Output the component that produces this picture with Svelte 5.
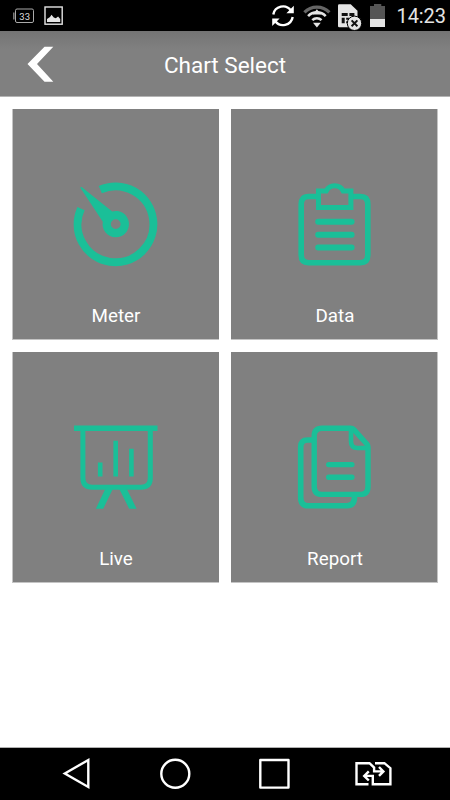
<script>
  // Chart picker: four tiles below the title bar, framed by the phone's own bars.
  const TILES = [
    { id: "meter", name: "Meter" },
    { id: "data", name: "Data" },
    { id: "live", name: "Live" },
    { id: "report", name: "Report" },
  ];
</script>

<div class="screen">
  <div class="status">
    <svg class="left" width="70" height="31" viewBox="0 0 70 31" aria-hidden="true">
      <rect x="15.5" y="9" width="18" height="13.5" rx="1.5" fill="none" stroke="#aaa" />
      <path d="M13.8 12.5v7" stroke="#777" stroke-width="1.6" />
      <text x="24.7" y="19.8" text-anchor="middle" class="level">33</text>
      <rect x="45" y="7" width="17.2" height="17.2" fill="none" stroke="#e4e4e4" stroke-width="1.4" />
      <path d="M47 22v-3l3-2 1.5-2.3 2.3 2.8 2 .8 2.3-1.8L60.2 19v3z" fill="#e4e4e4" />
    </svg>
    <svg class="right" width="130" height="31" viewBox="260 0 130 31" aria-hidden="true">
      <g fill="none" stroke="#fff" stroke-width="2.4">
        <path d="M273.3 14.5a9.8 9.8 0 0 1 17.6-4" />
        <path d="M292.7 17a9.8 9.8 0 0 1-17.6 4" />
      </g>
      <path d="M293.8 5.7v7.6h-7.4zM272.2 26v-7.6h7.4z" fill="#fff" />
      <path d="M304.4 12.3a17.5 17.5 0 0 1 25 0" fill="none" stroke="#666" stroke-width="3.2" />
      <path d="M308.1 16.1a12.3 12.3 0 0 1 17.6 0M312.3 20.1a6.6 6.6 0 0 1 9.2 0" fill="none" stroke="#e4e4e4" stroke-width="2.6" />
      <path d="M312.8 14.5l4.1-5.2 4.1 5.2zM313 22.8h7.8l-3.9 4.7z" fill="#e4e4e4" />
      <path d="M338 5.4q0-1.2 1.2-1.2h11.5l6.8 6.5v15.5q0 1-1 1h-17.3q-1.2 0-1.2-1.2z" fill="#e4e4e4" />
      <path d="M341.7 13h6v3h-6zM349.4 13h5v3h-5zM341.7 17.7h3v5.5h-3zM346.2 17.7h3v2h-3zM346.2 21.3h2v2h-2z" fill="#111" />
      <circle cx="354.5" cy="23.3" r="7.2" fill="#e4e4e4" stroke="#000" />
      <path d="M351.6 20.4l5.8 5.8M357.4 20.4l-5.8 5.8" stroke="#111" stroke-width="2" />
      <path d="M370 6h4V4h7.3v2h3.7v13.5h-15z" fill="#555" />
      <path d="M370 19h15v8h-15z" fill="#e4e4e4" />
    </svg>
    <span class="clock">14:23</span>
  </div>

  <header>
    <button class="back" aria-label="Back">
      <svg width="28" height="38" viewBox="26 46 28 38">
        <path d="M44.5 46.8h8.8L37 64l16.3 17.7h-8.8L27.5 64z" fill="#fff" />
      </svg>
    </button>
    <h1>Chart Select</h1>
  </header>

  <main>
    {#each TILES as tile}
      <button class="tile">
        {#if tile.id === "meter"}
          <svg viewBox="0 0 100 100" aria-hidden="true">
            <path d="M34.3 14.6A37.9 37.9 0 1 1 15 33.6" class="line" stroke-width="7.9" />
            <path class="solid" fill-rule="evenodd" d="M14.2 12.4L15.6 12L46.2 36.4A13.2 13.2 0 1 1 36.8 46.8zM49.7 44.2a4.9 4.9 0 1 0 0 9.8a4.9 4.9 0 1 0 0-9.8z" />
          </svg>
        {:else if tile.id === "data"}
          <svg viewBox="0 0 100 100" aria-hidden="true">
            <path d="M32 21.5h-8.5q-7.3 0-7.3 7.5v51q0 7.7 7.3 7.7h52q7.3 0 7.3-7.7V29q0-7.5-7.3-7.5H68" class="line" stroke-width="5.6" />
            <path d="M33.5 16.1h7.6q2.6-5.4 8.6-5.4t8.6 5.4h7.6v16.3H33.5z" class="line" stroke-width="5" />
            <path d="M33.2 46.7h33.4M33.2 59.7h33.4M33.2 72.6h33.4" class="line round" stroke-width="6" />
          </svg>
        {:else if tile.id === "live"}
          <svg viewBox="0 3 100 100" aria-hidden="true">
            <path d="M8 10.5h83.5v5.4H8z" class="solid" />
            <path d="M16.9 15v48q0 9.2 9.2 9.2h49q9.2 0 9.2-9.2V15" class="line" stroke-width="5" />
            <path d="M34.2 61.5V47.5M49.7 61.5V25.7M65.4 61.5V33.8" class="line" stroke-width="4.6" />
            <path d="M39.5 73.5h7.6L37.2 93.7h-7.4zM53 73.5h7.6l10 20.2h-7.4z" class="solid" />
          </svg>
        {:else}
          <svg viewBox="0 3 100 100" aria-hidden="true">
            <path d="M27 25h-4.3q-7 0-7 7v50.5q0 8.3 7.7 8.3h38.4q7.7 0 7.7-9" class="line" stroke-width="5.6" />
            <path d="M37 13.2h28.5q2 0 3.4 1.5l12.7 14q1.4 1.4 1.4 3.4V71.4q0 8-7.8 8H37q-7.8 0-7.8-8V21q0-7.8 7.8-7.8z" class="line" stroke-width="5.4" />
            <path d="M66 13v13.5q0 6.5 6.5 6.5H83" class="line" stroke-width="4.6" />
            <path d="M43.7 49.6h23.2M43.7 62.3h23.2" class="line round" stroke-width="5.4" />
          </svg>
        {/if}
        <span>{tile.name}</span>
      </button>
    {/each}
  </main>

  <nav>
    <svg width="450" height="52" viewBox="0 748 450 52" fill="none" stroke="#fff" stroke-width="2.4" aria-hidden="true">
      <path d="M64.8 773.5L88.3 760v27z" />
      <circle cx="175.3" cy="773.7" r="14" />
      <rect x="260.3" y="760" width="28.2" height="27.6" stroke-linejoin="round" />
      <path d="M368.5 784.2h-12v-21h13l4.6 4.4v3.8h7.6M379 767l4.4 4.4-4.4 4.4M375 763.2h9.4l6 5v16h-17.6v-8.3h-7M368.8 771.3l-4.6 4.6 4.6 4.6" />
    </svg>
  </nav>
</div>

<style>
  :global(body) {
    margin: 0;
    background: #fff;
  }
  .screen {
    width: 450px;
    height: 800px;
    display: flex;
    flex-direction: column;
    overflow: hidden;
    background: #fff;
    font-family: Roboto, "Noto Sans", sans-serif;
  }
  .status {
    height: 31px;
    flex: none;
    display: flex;
    background: #000;
  }
  .left {
    margin-right: auto;
  }
  .level {
    font-size: 9.5px;
    fill: #ddd;
  }
  .clock {
    width: 60px;
    box-sizing: border-box;
    padding-left: 6.5px;
    font-size: 20px;
    line-height: 33px;
    letter-spacing: -0.1px;
    color: #e4e4e4;
  }
  header {
    height: 66px;
    flex: none;
    box-sizing: border-box;
    display: grid;
    grid-template-columns: 80px 1fr 80px;
    align-items: center;
    background: linear-gradient(#747474, #808080 18px);
    border-bottom: 1px solid #b4b4b4;
  }
  button {
    border: 0;
    padding: 0;
    background: none;
    font-family: inherit;
    cursor: pointer;
  }
  .back {
    display: flex;
    padding: 2px 0 0 26px;
  }
  h1 {
    margin: 0;
    text-align: center;
    font-size: 22.5px;
    font-weight: 400;
    line-height: 30px;
    padding-top: 3px;
    color: #fff;
  }
  main {
    flex: 1;
    display: grid;
    grid-template-columns: 207px 207px;
    grid-auto-rows: 231px;
    gap: 12px;
    align-content: start;
    padding: 12px 12px 0;
    border-bottom: 1px solid #b0b0b0;
  }
  .tile {
    display: flex;
    flex-direction: column;
    align-items: center;
    padding-top: 66px;
    background: #808080;
    border: 0 solid #c4c4c4;
    border-bottom-width: 1px;
    color: #fff;
    font-size: 18.8px;
  }
  .tile:nth-child(odd) {
    border-left-width: 1px;
  }
  .tile:nth-child(even) {
    border-right-width: 1px;
    padding-left: 2px;
  }
  .tile svg {
    width: 100px;
    height: 100px;
    flex: none;
  }
  .tile span {
    margin-top: 29px;
    line-height: 24px;
  }
  .line {
    fill: none;
    stroke: #1abf98;
  }
  .round {
    stroke-linecap: round;
  }
  .solid {
    fill: #1abf98;
  }
  nav {
    height: 52px;
    flex: none;
    background: #000;
  }
  nav svg {
    display: block;
  }
</style>
